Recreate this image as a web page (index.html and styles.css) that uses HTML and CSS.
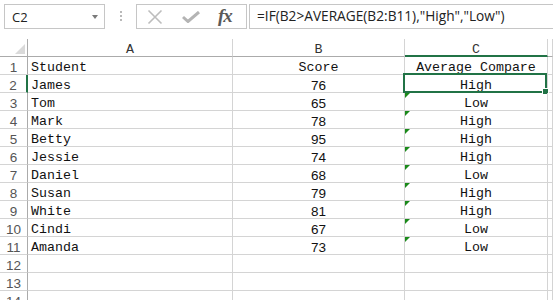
FILE: index.html
```html
<!DOCTYPE html>
<html lang="en">

<head>
   <meta charset="UTF-8">
   <title>Sheet</title>
   <link rel="stylesheet" href="styles.css">
</head>

<body>
   <!-- formula bar -->
   <div class="toolbar">
      <div class="name-box">
         <span>C2</span>
         <span class="drop"></span>
      </div>
      <div class="grip"><i></i><i></i><i></i></div>
      <div class="fx-buttons">
         <svg class="icon-x" width="16" height="16" viewBox="0 0 16 16">
            <path d="M1.5 1.5 L14.5 14.5 M14.5 1.5 L1.5 14.5" stroke="#bdbdbd" stroke-width="1.6" fill="none"/>
         </svg>
         <svg class="icon-check" width="18" height="12" viewBox="0 0 18 12">
            <path d="M1 6 L6 10.5 L17 1" stroke="#b4b4b4" stroke-width="3" fill="none"/>
         </svg>
         <span class="fx">fx</span>
      </div>
      <div class="formula">=IF(B2&gt;AVERAGE(B2:B11),"High","Low")</div>
   </div>

   <!-- sheet grid -->
   <div class="sheet">
      <div class="hd corner"><span class="corner-tri"></span></div>
      <div class="hd col">A</div>
      <div class="hd col">B</div>
      <div class="hd col active-col">C</div>
      <div class="hd col"></div>

      <div class="hd row">1</div>
      <div class="cell">Student</div>
      <div class="cell mid">Score</div>
      <div class="cell mid">Average Compare</div>
      <div class="cell"></div>

      <div class="hd row active-row">2</div>
      <div class="cell">James</div>
      <div class="cell num">76</div>
      <div class="cell mid selected">High<span class="sel-box"><span class="handle"></span></span></div>
      <div class="cell"></div>

      <div class="hd row">3</div>
      <div class="cell">Tom</div>
      <div class="cell num">65</div>
      <div class="cell mid flag">Low</div>
      <div class="cell"></div>

      <div class="hd row">4</div>
      <div class="cell">Mark</div>
      <div class="cell num">78</div>
      <div class="cell mid flag">High</div>
      <div class="cell"></div>

      <div class="hd row">5</div>
      <div class="cell">Betty</div>
      <div class="cell num">95</div>
      <div class="cell mid flag">High</div>
      <div class="cell"></div>

      <div class="hd row">6</div>
      <div class="cell">Jessie</div>
      <div class="cell num">74</div>
      <div class="cell mid flag">High</div>
      <div class="cell"></div>

      <div class="hd row">7</div>
      <div class="cell">Daniel</div>
      <div class="cell num">68</div>
      <div class="cell mid flag">Low</div>
      <div class="cell"></div>

      <div class="hd row">8</div>
      <div class="cell">Susan</div>
      <div class="cell num">79</div>
      <div class="cell mid flag">High</div>
      <div class="cell"></div>

      <div class="hd row">9</div>
      <div class="cell">White</div>
      <div class="cell num">81</div>
      <div class="cell mid flag">High</div>
      <div class="cell"></div>

      <div class="hd row">10</div>
      <div class="cell">Cindi</div>
      <div class="cell num">67</div>
      <div class="cell mid flag">Low</div>
      <div class="cell"></div>

      <div class="hd row">11</div>
      <div class="cell">Amanda</div>
      <div class="cell num">73</div>
      <div class="cell mid flag">Low</div>
      <div class="cell"></div>

      <div class="hd row">12</div>
      <div class="cell"></div>
      <div class="cell"></div>
      <div class="cell"></div>
      <div class="cell"></div>

      <div class="hd row">13</div>
      <div class="cell"></div>
      <div class="cell"></div>
      <div class="cell"></div>
      <div class="cell"></div>

      <div class="hd row">14</div>
      <div class="cell"></div>
      <div class="cell"></div>
      <div class="cell"></div>
      <div class="cell"></div>
   </div>
</body>

</html>
```

FILE: styles.css
```css
body {
   margin: 0;
   height: 300px;
   overflow: hidden;
   background: #fff;
   font-family: 'Liberation Mono', monospace;
}

/* formula bar */
.toolbar {
   display: flex;
   align-items: flex-start;
   height: 39px;
   padding: 4px 0 0 4px;
   box-sizing: border-box;
}

.name-box {
   width: 101px;
   height: 25px;
   box-sizing: border-box;
   border: 1px solid #c6c6c6;
   display: flex;
   align-items: center;
   justify-content: space-between;
   padding: 0 6px 0 7px;
   font-family: 'Open Sans', sans-serif;
   font-size: 13px;
   color: #222;
}

.drop {
   width: 0;
   height: 0;
   border-left: 3.5px solid transparent;
   border-right: 3.5px solid transparent;
   border-top: 4px solid #7a7a7a;
}

.grip {
   width: 31px;
   display: flex;
   flex-direction: column;
   align-items: center;
   gap: 2px;
   padding-top: 7px;
}

.grip i {
   width: 2px;
   height: 2px;
   background: #b9b9b9;
}

.fx-buttons {
   width: 111px;
   height: 25px;
   box-sizing: border-box;
   border: 1px solid #c6c6c6;
   display: flex;
   align-items: center;
   padding-left: 10px;
}

.icon-x {
   margin-right: 19px;
}

.icon-check {
   margin-top: 1px;
   margin-right: 18px;
}

.fx {
   font-family: 'Liberation Serif', serif;
   font-style: italic;
   font-weight: bold;
   font-size: 19px;
   color: #5a5a5a;
   letter-spacing: -1px;
   margin-top: -2px;
}

.formula {
   flex: 1;
   height: 25px;
   margin-left: 2px;
   box-sizing: border-box;
   border: 1px solid #c6c6c6;
   border-right: none;
   padding-left: 7px;
   font-family: 'Open Sans', sans-serif;
   font-size: 13.7px;
   line-height: 22px;
   color: #222;
   white-space: nowrap;
}

/* sheet grid */
.sheet {
   display: grid;
   grid-template-columns: 28px 205px 172px 143px 1fr;
   grid-auto-rows: 18px;
}

.hd,
.cell {
   box-sizing: border-box;
   border-right: 1px solid #d4d4d4;
   border-bottom: 1px solid #d4d4d4;
   padding-top: 3px;
   line-height: 15px;
   white-space: nowrap;
}

.hd {
   color: #555;
   text-align: center;
}

.hd.col {
   font-size: 13.3px;
   color: #333;
   border-bottom-color: #ababab;
}

.hd.corner {
   position: relative;
   border-bottom-color: #ababab;
   border-right-color: #ababab;
}

.corner-tri {
   position: absolute;
   right: 2px;
   bottom: 2px;
   width: 0;
   height: 0;
   border-left: 10px solid transparent;
   border-bottom: 10px solid #dadada;
}

.hd.row {
   font-family: 'Liberation Sans', sans-serif;
   font-size: 13.5px;
   border-right-color: #ababab;
}

.active-col {
   border-bottom: 2px solid #217346 !important;
}

.active-row {
   border-right: 2px solid #217346 !important;
}

.cell {
   font-size: 13.3px;
   color: #111;
   padding-left: 3px;
}

.mid {
   text-align: center;
   padding-left: 0;
}

.num {
   text-align: center;
   padding-left: 0;
   font-family: 'Liberation Sans', sans-serif;
   font-size: 13.5px;
}

/* error indicator */
.flag {
   position: relative;
}

.flag::before {
   content: '';
   position: absolute;
   left: 0;
   top: 0;
   border-top: 5px solid #1a8a1a;
   border-right: 5px solid transparent;
}

.selected {
   position: relative;
}

.sel-box {
   position: absolute;
   left: -2px;
   top: -2px;
   width: 144px;
   height: 20px;
   box-sizing: border-box;
   border: 2px solid #217346;
}

.handle {
   position: absolute;
   right: -4px;
   bottom: -4px;
   width: 5px;
   height: 5px;
   background: #217346;
   border: 1px solid #fff;
}
```
